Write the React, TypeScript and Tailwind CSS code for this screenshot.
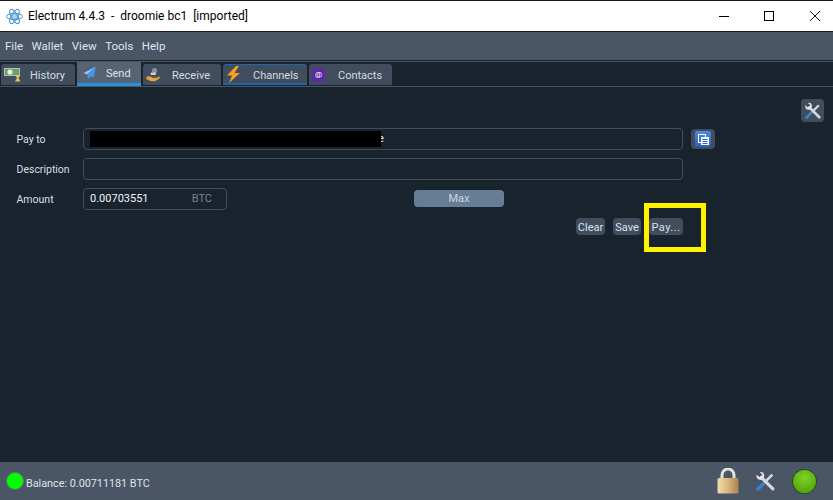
const menuItems = ["File", "Wallet", "View", "Tools", "Help"];

function ElectrumLogo() {
  return (
    <svg width="17" height="17" viewBox="0 0 17 17" fill="none" stroke="#3f8fc4" strokeWidth="1">
      <ellipse cx="8.5" cy="8.5" rx="8" ry="3.2" />
      <ellipse cx="8.5" cy="8.5" rx="8" ry="3.2" transform="rotate(60 8.5 8.5)" />
      <ellipse cx="8.5" cy="8.5" rx="8" ry="3.2" transform="rotate(120 8.5 8.5)" />
      <circle cx="8.5" cy="8.5" r="3" fill="#a9d3ee" strokeWidth="0.8" />
    </svg>
  );
}

function WindowButtons() {
  return (
    <div className="ml-auto flex items-center pr-[13px]">
      <svg width="10" height="10" viewBox="0 0 10 10">
        <path d="M0 5.500h10" stroke="#000000" />
      </svg>
      <svg className="ml-[35px]" width="10" height="10" viewBox="0 0 10 10">
        <rect x="0.500" y="0.500" width="9" height="9" fill="none" stroke="#000000" />
      </svg>
      <svg className="ml-[36px]" width="10" height="10" viewBox="0 0 10 10">
        <path d="M0 0 10 10M10 0 0 10" stroke="#000000" strokeWidth="0.900" />
      </svg>
    </div>
  );
}

function HistoryIcon() {
  return (
    <svg width="17" height="15" viewBox="0 0 17 15">
      <rect x="0" y="1" width="16" height="8" fill="#a9c9a4" />
      <rect x="1" y="2" width="14" height="6" fill="#6f9c72" />
      <circle cx="6" cy="5" r="2.6" fill="#e8f3e2" />
      <path d="M11 8h5.5l-2 3 2 3.5H11l2-3.5z" fill="#e3c25f" />
    </svg>
  );
}

function SendIcon() {
  return (
    <svg width="14" height="14" viewBox="0 0 14 14">
      <path d="M13 0.5 0.5 7l3.7 1.6z" fill="#8fc8f5" />
      <path d="M13 0.5 4.2 8.6 5 13.5l2.4-3.2 3.3 1.4z" fill="#3f97e6" />
    </svg>
  );
}

function ReceiveIcon() {
  return (
    <svg width="15" height="16" viewBox="0 0 15 16">
      <circle cx="8.5" cy="3.5" r="2.6" fill="#8a8f96" />
      <path d="M0.5 9.5h4l2 1.2h4l3.5-1.2c.6 1-.8 2.2-2.4 3.2-1.8 1-3.6 1.8-5.6 1.6-2-.2-3.2-1.6-5.500-1.800z" fill="#e9a23b" />
      <rect x="4.5" y="5.6" width="5.5" height="2.4" rx="1" fill="#c9cdd2" />
    </svg>
  );
}

function ChannelsIcon() {
  return (
    <svg width="15" height="17" viewBox="0 0 15 17">
      <path d="M10 0 1 9.5h5L3 17l11-10H8.500L13 0z" fill="#f3a024" />
    </svg>
  );
}

function ContactsIcon() {
  return (
    <span className="flex h-[14px] w-[13px] items-center justify-center bg-[#5a2d9c] text-[8px] leading-none text-white">
      @
    </span>
  );
}

function WrenchIcon({ size }: { size: number }) {
  return (
    <svg width={size} height={size} viewBox="0 0 20 20">
      <path d="M16.500 3.500 9 11" stroke="#d7dadc" strokeWidth="2.400" />
      <path d="M2.800 17.200 8 12" stroke="#3f7fc8" strokeWidth="3.200" strokeLinecap="round" />
      <path d="M17 17 6 6" stroke="#d7dadc" strokeWidth="3" strokeLinecap="round" />
      <path d="M1.500 3.500 4.500 6 7 3.500 4.500 1C7.500.2 9.500 2.500 8.500 6L6 8.500C3 9 .8 6.500 1.500 3.500z" fill="#e3e5e6" />
    </svg>
  );
}

function CopyIcon() {
  return (
    <span className="flex h-[16px] w-[16px] items-center justify-center rounded-[2px] bg-gradient-to-b from-[#4f8be0] to-[#2a5fb8]">
      <svg width="11" height="11" viewBox="0 0 11 11">
        <rect x="0.500" y="0.500" width="7" height="8" fill="none" stroke="#ffffff" />
        <rect x="3" y="3" width="8" height="8" fill="#ffffff" />
        <path d="M4.500 5.500h5M4.500 7.500h5M4.500 9.500h5" stroke="#2a5fb8" />
      </svg>
    </span>
  );
}

function LockIcon() {
  return (
    <svg width="22" height="26" viewBox="0 0 22 26">
      <defs>
        <linearGradient id="lockBody" x1="0" x2="1" y1="0" y2="0">
          <stop offset="0" stopColor="#f0dcae" />
          <stop offset="0.5" stopColor="#d9b67a" />
          <stop offset="1" stopColor="#a98350" />
        </linearGradient>
      </defs>
      <path d="M5 11V7a6 6 0 0 1 12 0v4" fill="none" stroke="#e6e3dc" strokeWidth="3" />
      <rect x="0.500" y="10" width="21" height="15.500" rx="1.500" fill="url(#lockBody)" />
    </svg>
  );
}

function StatusBall() {
  return (
    <span className="flex h-[25px] w-[25px] items-center justify-center rounded-full bg-[#2f4a22] p-px">
      <span className="h-full w-full rounded-full bg-[radial-gradient(circle_at_50%_35%,#7fd32a,#55a80c_75%)]" />
    </span>
  );
}

type TabProps = {
  label: string;
  icon: React.ReactNode;
  width: string;
  labelGap: string;
  active?: boolean;
  accent?: boolean;
};

function Tab({ label, icon, width, labelGap, active, accent }: TabProps) {
  if (active) {
    return (
      <div className={`flex h-[24px] ${width} items-center border-b-[3px] border-[#2a8fdc] bg-[#566373] pl-[6px] mb-[-1px]`}>
        <span className="flex w-[23px] shrink-0 items-center">{icon}</span>
        <span className={`${labelGap} pt-[4px] text-[#dbe2ea]`}>{label}</span>
      </div>
    );
  }
  return (
    <div
      className={`mt-[2px] flex h-[21px] ${width} items-center rounded-t-[3px] bg-[#414d5c] pl-[3px] ${
        accent ? "border-t border-b-2 border-[#1f66a8]" : ""
      }`}
    >
      <span className="flex w-[24px] shrink-0 items-center">{icon}</span>
      <span className={`${labelGap} pt-[4px] text-[#d3dae2]`}>{label}</span>
    </div>
  );
}

function FieldLabel({ children }: { children: React.ReactNode }) {
  return <span className="w-[67px] shrink-0 pl-[0.5px] pt-px text-[10.5px] text-[#d9dfe6]">{children}</span>;
}

function SmallButton({ label, width, className }: { label: string; width: string; className?: string }) {
  return (
    <button className={`flex h-[17px] ${width} items-center justify-center rounded-[4px] bg-[#414d5c] pt-[3px] text-[#d5e2f0] ${className ?? ""}`}>
      {label}
    </button>
  );
}

export default function App() {
  return (
    <div className="relative flex h-[500px] w-[833px] flex-col overflow-hidden bg-[#19232e] font-['Roboto','Open_Sans',sans-serif] text-[11px]">
      {/* title bar */}
      <div className="flex h-[32px] shrink-0 items-center border-y border-[#1c1c1c] bg-white pl-[6px] text-[12px] text-black">
        <ElectrumLogo />
        <span className="ml-[5px] whitespace-pre">Electrum 4.4.3  -  droomie bc1  [imported]</span>
        <WindowButtons />
      </div>

      {/* menu */}
      <div className="flex h-[29px] shrink-0 items-center gap-[8.5px] border-b border-[#1a222c] bg-[#4a5666] pl-[5px] pt-px text-[11.5px] text-[#dfe5ec]">
        {menuItems.map((item) => (
          <span key={item}>{item}</span>
        ))}
      </div>

      {/* tabs */}
      <div className="flex h-[26px] shrink-0 items-start gap-[2px] border-y border-[#4a5666] pl-px">
        <Tab label="History" icon={<HistoryIcon />} width="w-[74px]" labelGap="ml-[2px]" />
        <Tab label="Send" icon={<SendIcon />} width="w-[64px]" labelGap="ml-0" active />
        <Tab label="Receive" icon={<ReceiveIcon />} width="w-[78px]" labelGap="ml-[2px]" />
        <Tab label="Channels" icon={<ChannelsIcon />} width="w-[84px]" labelGap="ml-[3px]" accent />
        <Tab label="Contacts" icon={<ContactsIcon />} width="w-[83px]" labelGap="ml-[2px]" />
      </div>

      {/* send tab */}
      <div className="flex min-h-0 flex-1 flex-col pl-[16px] pt-[12px]">
        <div className="mr-[9px] flex justify-end">
          <span className="flex h-[23px] w-[23px] items-center justify-center rounded-[4px] bg-[#414d5c]">
            <WrenchIcon size={18} />
          </span>
        </div>

        <div className="mt-[6px] flex h-[22px] items-center">
          <FieldLabel>Pay to</FieldLabel>
          <div className="flex h-[22px] w-[600px] items-center rounded-[4px] border border-[#414d5c] pl-[6px] text-[#e8edf2]">
            <span className="h-[16px] w-[291px] bg-black" />
            {/* only the tail of the address shows past the redaction */}
            <span className="w-[3px] overflow-hidden pt-px">
              <span className="ml-[-3px] block">e</span>
            </span>
          </div>
          <span className="ml-[8px] flex h-[20px] w-[24px] items-center justify-center rounded-[4px] bg-[#414d5c]">
            <CopyIcon />
          </span>
        </div>

        <div className="mt-[8px] flex h-[22px] items-center">
          <FieldLabel>Description</FieldLabel>
          <div className="h-[22px] w-[600px] rounded-[4px] border border-[#414d5c]" />
        </div>

        <div className="mt-[8px] flex h-[22px] items-center">
          <FieldLabel>Amount</FieldLabel>
          <div className="flex h-[22px] w-[144px] items-center rounded-[4px] border border-[#414d5c] pl-[6px] pt-px text-[#f1f4f7]">
            <span>0.00703551</span>
            <span className="ml-auto mr-[14px] text-[#76818d]">BTC</span>
          </div>
          <button className="ml-[187px] mt-[2px] h-[17px] w-[90px] self-start rounded-[4px] bg-[#667d93] pt-px text-[#c9d6e3]">Max</button>
        </div>

        <div className="mt-[8px] flex w-[667px] justify-end gap-[8px]">
          <SmallButton label="Clear" width="w-[29px]" />
          <SmallButton label="Save" width="w-[28px]" />
          <SmallButton label="Pay..." width="w-[34px]" className="tracking-[0.5px]" />
        </div>
      </div>

      {/* status bar */}
      <div className="flex h-[38px] shrink-0 items-center bg-[#4a5666] pl-[6px] pr-[16px] text-[#dfe5ec]">
        <span className="h-[18px] w-[18px] rounded-full border border-[#5f7a5f] bg-[#00ff00]" />
        <span className="ml-[2px] pt-[6px] text-[10.8px]">Balance: 0.00711181 BTC</span>
        <div className="ml-auto flex items-center gap-[16px]">
          <LockIcon />
          <WrenchIcon size={21} />
          <StatusBall />
        </div>
      </div>

      {/* yellow annotation */}
      <div className="absolute left-[644px] top-[203px] h-[49px] w-[62px] border-[5px] border-[#fff200]" />
    </div>
  );
}
